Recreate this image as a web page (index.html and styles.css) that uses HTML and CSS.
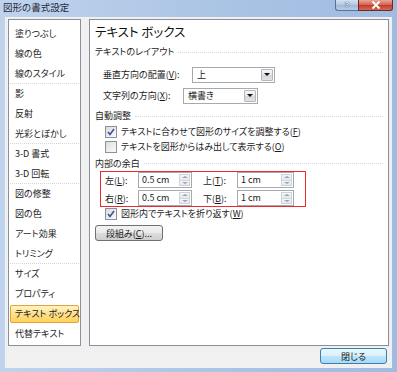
FILE: index.html
```html
<!DOCTYPE html>
<html>
<head>
  <meta charset="utf-8">
  <title>図形の書式設定</title>
  <link rel="stylesheet" href="styles.css">
</head>
<body>
  <div class="window">
    <div class="titlebar">
      <span class="title">図形の書式設定</span>
      <div class="caption-buttons">
        <span class="caption-help">?</span>
        <span class="caption-close">
          <svg width="10" height="8" viewBox="0 0 10 8"><path d="M1.5 0.5 L8.5 7.5 M8.5 0.5 L1.5 7.5" stroke="#fff" stroke-width="2"/></svg>
        </span>
      </div>
    </div>

    <div class="client">
      <div class="content">
        <ul class="nav">
          <li>塗りつぶし</li>
          <li>線の色</li>
          <li class="sep">線のスタイル</li>
          <li>影</li>
          <li>反射</li>
          <li class="sep">光彩とぼかし</li>
          <li>3-D 書式</li>
          <li class="sep">3-D 回転</li>
          <li>図の修整</li>
          <li>図の色</li>
          <li>アート効果</li>
          <li class="sep">トリミング</li>
          <li>サイズ</li>
          <li>プロパティ</li>
          <li class="selected">テキスト ボックス</li>
          <li>代替テキスト</li>
        </ul>

        <div class="panel">
          <h1>テキスト ボックス</h1>

          <div class="group-title">テキストのレイアウト</div>
          <div class="field-row first">
            <label class="label-vertical">垂直方向の配置(<u>V</u>):</label>
            <div class="combo combo-vertical"><span class="combo-value">上</span><span class="combo-btn"></span></div>
          </div>
          <div class="field-row">
            <label class="label-direction">文字列の方向(<u>X</u>):</label>
            <div class="combo combo-direction"><span class="combo-value">横書き</span><span class="combo-btn"></span></div>
          </div>

          <div class="group-title auto">自動調整</div>
          <div class="check-row">
            <span class="check checked"><svg width="8" height="8" viewBox="0 0 8 8"><path d="M1 4 L3 6.5 L7 1" fill="none" stroke="#3a5596" stroke-width="1.6"/></svg></span>
            テキストに合わせて図形のサイズを調整する(<u>F</u>)
          </div>
          <div class="check-row">
            <span class="check"></span>
            テキストを図形からはみ出して表示する(<u>O</u>)
          </div>

          <div class="group-title inner">内部の余白</div>
          <div class="margin-box">
            <div class="margin-row">
              <label class="margin-label">左(<u>L</u>):</label>
              <div class="spin spin-left"><span class="spin-value">0.5 cm</span><span class="spin-btns"><span class="spin-up"></span><span class="spin-down"></span></span></div>
              <label class="margin-label right">上(<u>T</u>):</label>
              <div class="spin spin-right"><span class="spin-value">1 cm</span><span class="spin-btns"><span class="spin-up"></span><span class="spin-down"></span></span></div>
            </div>
            <div class="margin-row">
              <label class="margin-label">右(<u>R</u>):</label>
              <div class="spin spin-left"><span class="spin-value">0.5 cm</span><span class="spin-btns"><span class="spin-up"></span><span class="spin-down"></span></span></div>
              <label class="margin-label right">下(<u>B</u>):</label>
              <div class="spin spin-right"><span class="spin-value">1 cm</span><span class="spin-btns"><span class="spin-up"></span><span class="spin-down"></span></span></div>
            </div>
          </div>
          <div class="check-row wrap">
            <span class="check checked"><svg width="8" height="8" viewBox="0 0 8 8"><path d="M1 4 L3 6.5 L7 1" fill="none" stroke="#3a5596" stroke-width="1.6"/></svg></span>
            図形内でテキストを折り返す(<u>W</u>)
          </div>

          <button class="btn columns">段組み(<u>C</u>)...</button>
        </div>
      </div>

      <div class="footer">
        <button class="btn close-btn">閉じる</button>
      </div>
    </div>
  </div>
</body>
</html>
```

FILE: styles.css
```css
body {
  margin: 0;
  font-family: "Noto Sans CJK JP", "Noto Sans", sans-serif;
  font-size: 9px;
  font-feature-settings: "palt";
  color: #1a1a1a;
}

.window {
  width: 397px;
  height: 372px;
  display: flex;
  flex-direction: column;
  background: linear-gradient(to right, #bfd3ec, #a9c3e4 60%, #9fbbe0);
}

/* title bar */

.titlebar {
  height: 17px;
  display: flex;
  justify-content: space-between;
  align-items: flex-start;
}

.title {
  padding: 1px 0 0 3px;
  font-size: 9.5px;
  line-height: 12px;
  color: #1e2a3a;
}

.caption-buttons {
  display: flex;
  margin-right: 4px;
}

.caption-help,
.caption-close {
  height: 11px;
  box-sizing: border-box;
  border: 1px solid #5a7394;
  border-top: none;
  display: flex;
  align-items: center;
  justify-content: center;
  overflow: hidden;
}

.caption-help {
  width: 23px;
  border-right: none;
  border-radius: 0 0 0 3px;
  background: linear-gradient(#d4e1f1, #b3c8e3 50%, #9fb8d8 50%, #b8cce6);
  color: #fff;
  font-family: "Liberation Sans", sans-serif;
  font-weight: bold;
  font-size: 8px;
  line-height: 8px;
  text-shadow: 0 0 1px #2b3f5c, 0 0 1px #2b3f5c;
}

.caption-close {
  width: 35px;
  border-radius: 0 0 3px 0;
  border-color: #6e2b22;
  background: linear-gradient(#e7a596, #d2614e 50%, #c0392b 50%, #d46a52);
}

/* client area */

.client {
  flex: 1;
  margin: 0 5px 4px 5px;
  padding: 2px 3px 0 3px;
  background: #f0f0f0;
}

.content {
  display: flex;
  gap: 8px;
  height: 327px;
}

/* category list */

.nav {
  list-style: none;
  margin: 0;
  padding: 4px 0 0;
  width: 73px;
  box-sizing: border-box;
  background: #fff;
  border: 1px solid #8a9099;
}

.nav li {
  height: 20px;
  line-height: 20px;
  margin: 0 1px;
  padding-left: 5px;
  box-sizing: border-box;
  white-space: nowrap;
}

.nav li.sep {
  border-bottom: 1px dotted #d6d6d6;
  line-height: 19px;
}

.nav li.selected {
  height: 18px;
  margin: 1px;
  padding-left: 4px;
  line-height: 16px;
  border: 1px solid #e1a43a;
  border-radius: 2px;
  background: linear-gradient(#fff3c6, #ffe08a 50%, #ffd25a);
}

/* settings panel */

.panel {
  flex: 1;
  background: #fff;
  border: 1px solid #8a9099;
  padding: 0 5px;
}

.panel h1 {
  margin: 0;
  height: 24px;
  line-height: 24px;
  font-size: 12.5px;
  font-weight: normal;
  color: #111;
}

.group-title {
  display: flex;
  align-items: center;
  height: 16px;
  line-height: 16px;
}

.group-title::after {
  content: "";
  flex: 1;
  margin-left: 4px;
  border-top: 1px dotted #cdd6e2;
}

.group-title.auto {
  margin-top: 2px;
}

.group-title.inner {
  margin-top: 2px;
  height: 15px;
}

.field-row {
  display: flex;
  align-items: center;
  height: 21px;
  padding-left: 8px;
}

.field-row.first {
  margin-top: 4px;
}

.label-vertical {
  width: 89px;
}

.label-direction {
  width: 80px;
}

.combo {
  display: flex;
  height: 16px;
  box-sizing: border-box;
  border: 1px solid #a5a9b0;
  background: #fff;
}

.combo-vertical {
  width: 83px;
}

.combo-direction {
  width: 75px;
}

.combo-value {
  flex: 1;
  padding-left: 4px;
  line-height: 14px;
}

.combo-btn {
  width: 12px;
  margin: 1px;
  border: 1px solid #b4b8be;
  border-radius: 1px;
  background: linear-gradient(#f6f6f6, #e6e6e6 50%, #d6d6d6 50%, #e2e2e2);
  display: flex;
  align-items: center;
  justify-content: center;
  box-sizing: border-box;
}

.combo-btn::after {
  content: "";
  border-top: 3px solid #111;
  border-left: 3px solid transparent;
  border-right: 3px solid transparent;
}

/* checkboxes */

.check-row {
  display: flex;
  align-items: center;
  height: 15px;
  padding-left: 10px;
  white-space: nowrap;
}

.check-row.wrap {
  height: 13px;
}

.check {
  width: 10px;
  height: 10px;
  margin-right: 4px;
  border: 1px solid #8e9196;
  background: linear-gradient(135deg, #dcdcdc, #fbfbfb);
  display: flex;
  align-items: center;
  justify-content: center;
  flex-shrink: 0;
}

/* inner margin box */

.margin-box {
  margin-left: 5px;
  width: 206px;
  box-sizing: border-box;
  border: 1px solid #ea2a2e;
  padding: 0 11px 0 4px;
  display: flex;
  flex-direction: column;
  gap: 2px;
}

.margin-row {
  display: flex;
  align-items: center;
  height: 16px;
}

.margin-label {
  width: 33px;
}

.margin-label.right {
  width: 34px;
  margin-left: 11px;
}

.spin {
  display: flex;
  height: 16px;
  box-sizing: border-box;
  border: 1px solid #a5a9b0;
  background: #fff;
}

.spin-left {
  width: 54px;
}

.spin-right {
  width: 57px;
}

.spin-value {
  flex: 1;
  padding-left: 3px;
  line-height: 14px;
}

.spin-btns {
  width: 11px;
  margin: 1px;
  display: flex;
  flex-direction: column;
  border: 1px solid #cfd3d8;
  box-sizing: border-box;
}

.spin-up,
.spin-down {
  flex: 1;
  display: flex;
  align-items: center;
  justify-content: center;
  background: linear-gradient(#f6f6f6, #e8e8e8);
}

.spin-up {
  border-bottom: 1px solid #d3d6da;
}

.spin-up::after {
  content: "";
  border-bottom: 2px solid #8ea7c6;
  border-left: 3px solid transparent;
  border-right: 3px solid transparent;
}

.spin-down::after {
  content: "";
  border-top: 2px solid #8ea7c6;
  border-left: 3px solid transparent;
  border-right: 3px solid transparent;
}

/* buttons */

.btn {
  font: inherit;
  font-feature-settings: "palt";
  color: #1a1a1a;
  padding: 0;
  box-sizing: border-box;
  border: 1px solid #707070;
  border-radius: 3px;
  background: linear-gradient(#f2f2f2, #ebebeb 50%, #dddddd 50%, #cfcfcf);
  line-height: 13px;
}

.btn.columns {
  display: block;
  margin-top: 5px;
  width: 68px;
  height: 16px;
}

.footer {
  display: flex;
  justify-content: flex-end;
  padding: 2px 2px 0 0;
}

.btn.close-btn {
  width: 67px;
  height: 16px;
  border-color: #3c7fb1;
  background: linear-gradient(#eaf6fd, #d9f0fc 50%, #bee6fd 50%, #a7d9f5);
}
```
